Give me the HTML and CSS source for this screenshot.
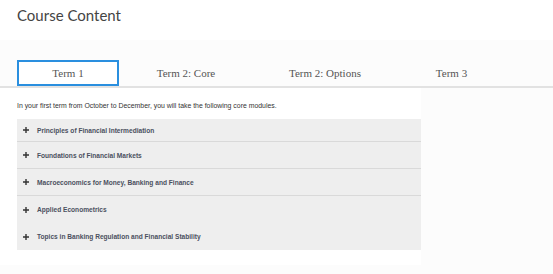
FILE: index.html
```html
<!doctype html>
<html lang="en">
    <head>
        <meta charset="UTF-8" />
        <meta name="viewport" content="width=device-width, initial-scale=1.0" />
        <title>Course Content</title>
        <link rel="stylesheet" href="styles.css">
    </head>
    <body>
        <header class="page-header">
            <h1>Course Content</h1>
        </header>

        <nav class="tabs">
            <a class="tab active" href="#">Term 1</a>
            <a class="tab" href="#">Term 2: Core</a>
            <a class="tab" href="#">Term 2: Options</a>
            <a class="tab" href="#">Term 3</a>
        </nav>

        <section class="panel">
            <p class="intro">In your first term from October to December, you will take the following core modules.</p>
            <ul class="accordion">
                <li class="acc-item">
                    <svg class="plus" width="6" height="6" viewBox="0 0 6 6"><path d="M2.3 0h1.4v6H2.3zM0 2.3h6v1.4H0z" fill="#333" /></svg>
                    <span>Principles of Financial Intermediation</span>
                </li>
                <li class="acc-item">
                    <svg class="plus" width="6" height="6" viewBox="0 0 6 6"><path d="M2.3 0h1.4v6H2.3zM0 2.3h6v1.4H0z" fill="#333" /></svg>
                    <span>Foundations of Financial Markets</span>
                </li>
                <li class="acc-item">
                    <svg class="plus" width="6" height="6" viewBox="0 0 6 6"><path d="M2.3 0h1.4v6H2.3zM0 2.3h6v1.4H0z" fill="#333" /></svg>
                    <span>Macroeconomics for Money, Banking and Finance</span>
                </li>
                <li class="acc-item">
                    <svg class="plus" width="6" height="6" viewBox="0 0 6 6"><path d="M2.3 0h1.4v6H2.3zM0 2.3h6v1.4H0z" fill="#333" /></svg>
                    <span>Applied Econometrics</span>
                </li>
                <li class="acc-item">
                    <svg class="plus" width="6" height="6" viewBox="0 0 6 6"><path d="M2.3 0h1.4v6H2.3zM0 2.3h6v1.4H0z" fill="#333" /></svg>
                    <span>Topics in Banking Regulation and Financial Stability</span>
                </li>
            </ul>
        </section>
    </body>
</html>
```

FILE: styles.css
```css
body {
    margin: 0;
    padding: 0;
    background: #fcfcfc;
    font-family: "Liberation Sans", Arial, sans-serif;
    color: #333333;
}

.page-header {
    height: 40px;
    background: #ffffff;
    box-sizing: border-box;
    padding: 5px 0 0 17px;
}

.page-header h1 {
    margin: 0;
    font-family: "Lato", sans-serif;
    font-weight: 400;
    font-size: 15px;
    line-height: 20px;
    color: #444444;
}

/* Term tabs */
.tabs {
    display: grid;
    grid-template-columns: 102px 134px 144px 109px;
    padding: 20px 0 0 17px;
    border-bottom: 2px solid #e2e2e2;
}

.tab {
    height: 24px;
    line-height: 24px;
    text-align: center;
    font-family: "Liberation Serif", serif;
    font-size: 11px;
    color: #555555;
    text-decoration: none;
    border: 1px solid transparent;
}

.tab.active {
    background: #ffffff;
    border: 2px solid #2a8fdf;
    height: 22px;
    line-height: 22px;
    margin-bottom: -2px;
}

/* Term panel */
.panel {
    width: 421px;
    box-sizing: border-box;
    background: #ffffff;
    padding: 13px 0 15px 17px;
}

.intro {
    margin: 0 0 8px;
    font-size: 6.9px;
    line-height: 10px;
    color: #333333;
}

.accordion {
    list-style: none;
    margin: 0;
    padding: 0;
    background: #eeeeee;
}

.acc-item {
    display: flex;
    align-items: center;
    gap: 8px;
    height: 26px;
    padding-left: 6px;
    border-bottom: 1px solid #d9d9d9;
    font-size: 6.6px;
    font-weight: bold;
    color: #4b505e;
}

.acc-item:first-child {
    height: 22px;
}

.acc-item:nth-child(4),
.acc-item:last-child {
    border-bottom: none;
    height: 27px;
}

.plus {
    flex: none;
}
```
